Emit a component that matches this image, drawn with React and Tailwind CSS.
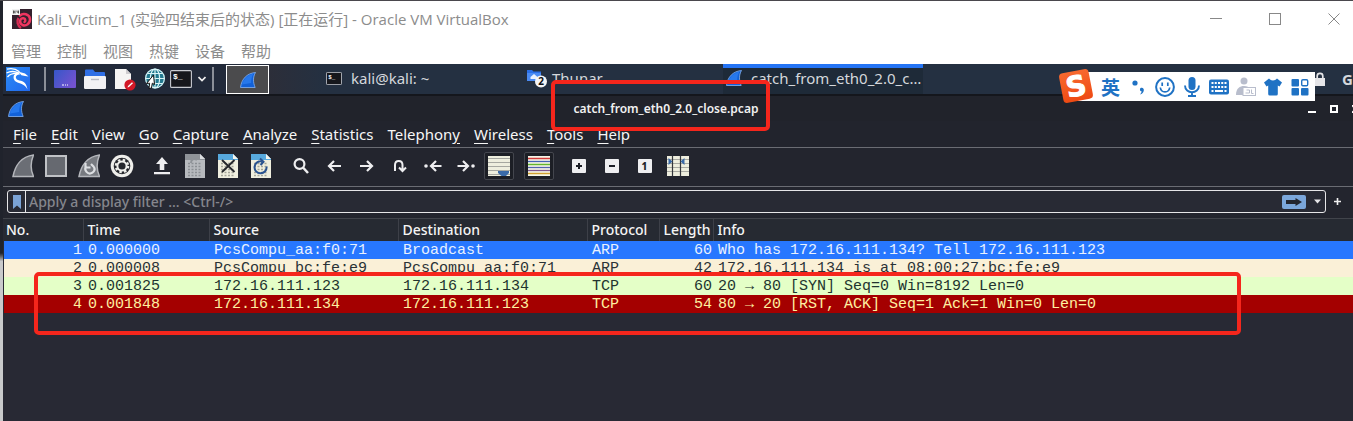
import React from "react";

const outerMenu = ["管理", "控制", "视图", "热键", "设备", "帮助"];

const menu = [
  ["", "F", "ile"],
  ["", "E", "dit"],
  ["", "V", "iew"],
  ["", "G", "o"],
  ["", "C", "apture"],
  ["", "A", "nalyze"],
  ["", "S", "tatistics"],
  ["Telephon", "y", ""],
  ["", "W", "ireless"],
  ["", "T", "ools"],
  ["", "H", "elp"],
];

const columns = [
  ["No.", "w-[79px]"],
  ["Time", "w-[126px]"],
  ["Source", "w-[189px]"],
  ["Destination", "w-[189px]"],
  ["Protocol", "w-[72px]"],
  ["Length", "w-[54px]"],
  ["Info", ""],
];

const packets = [
  { tone: "bg-[#2777ff] text-[#e8f1ff]", cells: ["1", "0.000000", "PcsCompu_aa:f0:71", "Broadcast", "ARP", "60", "Who has 172.16.111.134? Tell 172.16.111.123"] },
  { tone: "bg-[#faf0d7] text-[#2a3236]", cells: ["2", "0.000008", "PcsCompu_bc:fe:e9", "PcsCompu_aa:f0:71", "ARP", "42", "172.16.111.134 is at 08:00:27:bc:fe:e9"] },
  { tone: "bg-[#e4ffc7] text-[#22342f]", cells: ["3", "0.001825", "172.16.111.123", "172.16.111.134", "TCP", "60", "20 → 80 [SYN] Seq=0 Win=8192 Len=0"] },
  { tone: "bg-[#a40000] text-[#fff0a0]", cells: ["4", "0.001848", "172.16.111.134", "172.16.111.123", "TCP", "54", "80 → 20 [RST, ACK] Seq=1 Ack=1 Win=0 Len=0"] },
];

function Fin({ size = 16 }) {
  return (
    <svg width={size} height={size} viewBox="0 0 16 16" aria-hidden="true">
      <path d="M0.5 15.5C1.5 7 7 1.2 15.5 0.5C12.8 5 13 10.500 15.200 15.500Z" fill="#1261d8" stroke="#86b4f2" strokeWidth="0.8" />
      <path d="M2 12.500C4 6.500 8 3 13.500 1.800C11.500 5 11 8 11.200 11Z" fill="#2f82f5" opacity="0.7" />
    </svg>
  );
}

function DebianIcon() {
  return (
    <svg width="20" height="20" viewBox="0 0 20 20" aria-hidden="true">
      <rect width="20" height="20" fill="#33202d" />
      <path d="M8 6.500C11 3.500 17.500 5 18 10C18.300 14.500 14 17.500 10.500 16C6.500 14 8 8.500 11.500 9.300C14 10 13.500 12.500 12.500 13" fill="none" stroke="#ef3560" strokeWidth="2.500" strokeLinecap="round" />
      <path d="M6.500 9C4.500 12 5.500 16.500 9 19" fill="none" stroke="#d52b54" strokeWidth="2.400" />
      <rect width="8" height="6" fill="#f2f2f2" />
      <path d="M1.500 1.500V4.500M1.500 3H3M3 1.500V4.500M5 1.500V3.200H6.800M6.500 1.500V4.500" stroke="#333" strokeWidth="0.8" fill="none" />
    </svg>
  );
}

function KaliIcon() {
  return (
    <svg width="24" height="24" viewBox="0 0 24 24" aria-hidden="true">
      <defs>
        <linearGradient id="kali" x1="0" y1="0" x2="1" y2="1">
          <stop offset="0" stopColor="#2b8bf5" />
          <stop offset="1" stopColor="#2169ee" />
        </linearGradient>
      </defs>
      <rect width="24" height="24" fill="url(#kali)" />
      <path d="M1 2.200C5 1 10 2 13.500 4.800M0.500 6C4 4.200 9 4.200 13 6M1.500 10C4 7.200 7 6.200 11 6.500" fill="none" stroke="#fff" strokeWidth="1.300" />
      <path d="M12 4.500L19 6.500L22.500 9.500L19 9L15.500 8.300Z" fill="#fff" />
      <path d="M14 7.500C9.500 7 8.500 11.500 12 13C16 14.300 20 14 21.500 22.500C19 17.500 15.500 17 11.500 15.500C6 13.500 6 6 13 5.500Z" fill="#fff" />
    </svg>
  );
}

function DesktopIcon() {
  return (
    <svg width="22" height="18" viewBox="0 0 22 18" aria-hidden="true">
      <defs>
        <linearGradient id="desk" x1="0" y1="0" x2="1" y2="0.6">
          <stop offset="0" stopColor="#3657c9" />
          <stop offset="1" stopColor="#7252cf" />
        </linearGradient>
      </defs>
      <rect width="22" height="18" rx="1" fill="url(#desk)" />
      <path d="M8 15H10M11 15H12M13 15H14" stroke="#fff" strokeWidth="1.200" />
    </svg>
  );
}

function FolderIcon() {
  return (
    <svg width="22" height="20" viewBox="0 0 22 20" aria-hidden="true">
      <path d="M1 9V1.500Q1 0.500 2 0.500H9L11 3H20Q21 3 21 4V9Z" fill="#2f6fe6" />
      <rect y="7" width="22" height="13" rx="1.200" fill="#f1f1f4" />
      <path d="M7 10.500H15" stroke="#b9bac4" strokeWidth="1.400" />
    </svg>
  );
}

function DocIcon() {
  return (
    <svg width="22" height="23" viewBox="0 0 22 23" aria-hidden="true">
      <path d="M1 1H12L17 6V21H1Z" fill="#f6f5f4" />
      <path d="M12 1V6H17Z" fill="#cfcdd0" />
      <circle cx="16" cy="17" r="5.600" fill="#d31826" />
      <path d="M13.500 19.500L14 18L18 14.200L19 15.200L15 19Z" fill="#fff" />
    </svg>
  );
}

function GlobeIcon() {
  return (
    <svg width="22" height="22" viewBox="0 0 22 22" aria-hidden="true">
      <circle cx="11" cy="10.500" r="10" fill="#22798f" />
      <g fill="none" stroke="#d9f3f6" strokeWidth="1.200">
        <circle cx="11" cy="10.500" r="9.400" />
        <ellipse cx="11" cy="10.500" rx="4.600" ry="9.400" />
        <path d="M11 1V20M1.500 10.500H20.500M3.200 5.500H18.800M3.200 15.500H18.800" />
      </g>
      <path d="M9.500 7L2.500 15.500L5.600 15.200L5 20.500L7.500 20L8.300 15.200L10.500 16.500Z" fill="#fff" stroke="#111" strokeWidth="1" />
    </svg>
  );
}

function TerminalIcon({ w = 22, h = 18 }) {
  return (
    <svg width={w} height={h} viewBox="0 0 22 18" aria-hidden="true">
      <rect x="0.600" y="0.600" width="20.800" height="16.800" rx="1" fill="#16171c" stroke="#c9cbd1" strokeWidth="1.100" />
      <text x="3" y="9" fontSize="8" fontWeight="700" fontFamily="Liberation Mono, monospace" fill="#fff">$_</text>
    </svg>
  );
}

function ThunarIcon() {
  return (
    <svg width="21" height="19" viewBox="0 0 21 19" aria-hidden="true">
      <path d="M0 1H5L6.500 2.500H14V12H0Z" fill="#2a6fe8" />
      <path d="M0 4H14V12H0Z" fill="#4a8af2" />
      <path d="M3.500 8L7 5L10.500 8V10H3.500Z" fill="#e8f0ff" />
      <circle cx="14" cy="12.500" r="6" fill="#f5f5f5" />
      <text x="14" y="16.200" textAnchor="middle" fontSize="10" fontWeight="700" fontFamily="Noto Sans, sans-serif" fill="#111">2</text>
    </svg>
  );
}

function S({ w = 22, h = 24, children }) {
  return (
    <svg width={w} height={h} viewBox={`0 0 ${w} ${h}`} fill="none" aria-hidden="true">
      {children}
    </svg>
  );
}

const FIN = "M1 22.500C3 11.500 9.500 2.500 21.500 1C18.500 8 18.500 16 21.500 22.500Z";

function Sheet({ head, children, gray }) {
  return (
    <S w={20} h={24}>
      <path d="M0 0H15L20 5V24H0Z" fill={gray ? "#b7babe" : "#efeede"} />
      <path d="M0 0H15L20 5V6H0Z" fill={head} />
      <path d="M15 0V5H20Z" fill={gray ? "#dcdee0" : "#f5f5ee"} />
      <path d="M3 9.500H17M3 12.500H17M3 15.500H17M3 18.500H17M3 21.500H17" stroke={gray ? "#8b8f94" : "#a5a69a"} strokeWidth="1.300" strokeDasharray="2 1.500" />
      {children}
    </S>
  );
}

const arrow = { stroke: "#eeeef0", strokeWidth: 2.2 };

function ZoomBox({ children }) {
  return <span className="flex size-[14px] items-center justify-center rounded-[1px] bg-[#eeeef0] text-[10px] leading-none font-extrabold text-[#1c1e26]">{children}</span>;
}

const toolGroups = [
  [
    ["Start capture", <S><path d={FIN} fill="#6b6e75" stroke="#b4b6bb" strokeWidth="1.500" /></S>],
    ["Stop capture", <S><rect x="1" y="2" width="20" height="20" fill="#666970" stroke="#c0c2c6" strokeWidth="2" /></S>],
    ["Restart capture", <S><path d={FIN} fill="#777a80" stroke="#b4b6bb" strokeWidth="1.500" /><path d="M8.500 12A4.500 4.500 0 1 0 16 13M7.500 9V13.500H12.500M16 13L13 10" stroke="#dcdee1" strokeWidth="2.200" /></S>],
    ["Capture options", <S w={24}><circle cx="12" cy="12" r="11.300" fill="#efefeb" /><circle cx="12" cy="12" r="8.300" fill="#25272c" /><circle cx="12" cy="12" r="6" stroke="#efefeb" strokeWidth="2.600" strokeDasharray="2.400 2.312" /><circle cx="12" cy="12" r="4.600" stroke="#efefeb" strokeWidth="2" /></S>],
  ],
  [
    ["Open", <S w={16} h={18}><path d="M8 0L14 7H10.300V13H5.700V7H2ZM0 15H16V17.300H0Z" fill="#eeeef0" /></S>],
    ["Save", <Sheet gray head="#8f9398"><path d="M6 9C6 5 9 4 12 6" stroke="#8f9398" strokeWidth="2" /></Sheet>],
    ["Close file", <Sheet head="#57a9dd"><path d="M4 6L16.500 18M16.500 6L4 18" stroke="#25272c" strokeWidth="1.900" /></Sheet>],
    ["Reload", <Sheet head="#57a9dd"><path d="M15.500 12.500A6 6 0 1 1 11 7.500M9 4.500L12.500 7.700L9.500 11" stroke="#29528f" strokeWidth="2" /></Sheet>],
  ],
  [
    ["Find", <S w={18} h={18}><circle cx="7.500" cy="7" r="4.900" stroke="#eeeef0" strokeWidth="2.200" /><path d="M11 10.500L16 16" stroke="#eeeef0" strokeWidth="2.500" /></S>],
    ["Previous", <S w={14} h={14}><path d="M1.500 7H14M7 2L2 7L7 12" {...arrow} /></S>],
    ["Next", <S w={14} h={14}><path d="M0 7H12.500M7 2L12 7L7 12" {...arrow} /></S>],
    ["Go to packet", <S w={14} h={14}><path d="M2 12V6C2 0.500 9.500 0.500 9.500 6V11M6 8.500L9.500 12L13 8.500" stroke="#eeeef0" strokeWidth="2" /></S>],
    ["First packet", <S w={18} h={14}><circle cx="2" cy="7" r="1.800" fill="#eeeef0" /><path d="M6.500 7H17.500M12 2L7 7L12 12" {...arrow} /></S>],
    ["Last packet", <S w={18} h={14}><circle cx="16" cy="7" r="1.800" fill="#eeeef0" /><path d="M0.500 7H11.500M6 2L11 7L6 12" {...arrow} /></S>],
    ["Auto scroll", <S h={20}><rect width="22" height="20" fill="#eeeede" /><path d="M0 2.500H22M0 6.500H22M0 10.500H22M0 14.500H22M0 18.500H22" stroke="#a6a7a0" /><path d="M10 15H21V17L18 20H13.500L10 17Z" fill="#3a6aa8" /></S>, true],
  ],
  [["Colorize", <S h={20}><rect width="22" height="20" fill="#f6f6e8" /><path d="M0 2.500H22" stroke="#d33b3b" strokeWidth="1.500" /><path d="M0 5.500H22" stroke="#4362b5" strokeWidth="1.300" /><path d="M0 8.500H22" stroke="#62b52e" strokeWidth="1.500" /><path d="M0 11.500H22" stroke="#5263b0" strokeWidth="1.300" /><path d="M0 14.500H22" stroke="#80568c" strokeWidth="1.300" /><path d="M0 17.500H22" stroke="#d0a030" strokeWidth="1.500" /></S>, true]],
  [
    ["Zoom in", <ZoomBox><S w={8} h={8}><path d="M1 4H7M4 1V7" stroke="#1c1e26" strokeWidth="2" /></S></ZoomBox>],
    ["Zoom out", <ZoomBox><S w={8} h={8}><path d="M1 4H7" stroke="#1c1e26" strokeWidth="2" /></S></ZoomBox>],
    ["Normal size", <ZoomBox>1</ZoomBox>],
    ["Resize columns", <S h={20}><rect width="22" height="20" fill="#eeeede" /><path d="M0 3.500H22M0 7.500H22M0 11.500H22M0 15.500H22" stroke="#a9aaa2" /><path d="M5.500 0V20M13.500 0V20" stroke="#33353b" strokeWidth="1.200" /><path d="M1.500 2L5.500 5.500L1.500 9ZM17.500 2L13.500 5.500L17.500 9Z" fill="#3a6aa8" /></S>],
  ],
];

const imeItems = [
  ["Language", <span className="text-[19px] leading-none font-bold">英</span>],
  ["Punctuation", <S w={16} h={16}><circle cx="5" cy="4" r="2.600" fill="#1f72c4" /><path d="M10.500 9C12.500 8 14.500 9.500 13.700 12C13.200 13.800 12 15 10 15.500C11.200 14.300 11.600 13.300 11.500 12.300C9.800 12.200 9.500 10 10.500 9Z" fill="#1f72c4" /></S>],
  ["Emoji", <S w={20} h={20}><circle cx="10" cy="10" r="8.900" stroke="#1f72c4" strokeWidth="2" /><path d="M5.300 10.500C6 16.300 14 16.300 14.700 10.500M7.200 5.500V9M12.800 5.500V9" stroke="#1f72c4" strokeWidth="1.700" /></S>],
  ["Voice", <S w={16} h={20}><rect x="4.500" y="0" width="7" height="13" rx="3.500" fill="#1f72c4" /><path d="M1 8.500C1 17.500 15 17.500 15 8.500M8 15V18.500M4 19H12" stroke="#1f72c4" strokeWidth="1.900" /></S>],
  ["Keyboard", <S w={20} h={16}><rect x="0" y="0.500" width="20" height="15" rx="2" fill="#1f72c4" /><path d="M2.500 4H17.500M2.500 8H17.500" stroke="#fff" strokeWidth="2" strokeDasharray="2 1.250" /><path d="M2.500 12H4.500M6 12H14M15.500 12H17.500" stroke="#fff" strokeWidth="2" /></S>],
  ["Account", <S w={20} h={20}><circle cx="8" cy="4" r="3.500" fill="#b8bdcc" /><path d="M0 18C0 11 4 9 8 9C11 9 13 10 14 12V18Z" fill="#b8bdcc" /><rect x="7" y="10.500" width="12.500" height="8" fill="#fff" stroke="#b8bdcc" /><path d="M9.500 16H13.500V13H10.500M15.500 12.500V16.500H17.500" stroke="#b8bdcc" /></S>],
  ["Skin", <S w={18} h={18}><path d="M5 0.500C7 3 11 3 13 0.500L18 4.500L15.500 8.500L13.800 7.500V16Q13.800 17.500 12.300 17.500H5.700Q4.200 17.500 4.200 16V7.500L2.500 8.500L0 4.500Z" fill="#1f72c4" /></S>],
  ["Toolbox", <S w={18} h={18}><rect x="0.500" y="1" width="7.500" height="7.500" rx="1" fill="#1f72c4" /><rect x="0.500" y="10" width="7.500" height="7.500" rx="1" fill="#1f72c4" /><rect x="10" y="10" width="7.500" height="7.500" rx="1" fill="#1f72c4" /><rect x="10.700" y="1.700" width="6" height="6" rx="1.200" stroke="#1f72c4" strokeWidth="1.400" /></S>],
];

function ImeBar() {
  return (
    <div className="absolute top-[71px] right-[38px] flex h-[29px] bg-white pr-0.5 pl-5 font-['Noto_Sans_CJK_SC',sans-serif] text-[#1f72c4]">
      {imeItems.map(([label, icon]) => (
        <button key={label} aria-label={label} className="flex w-[27px] items-center justify-center">{icon}</button>
      ))}
      <svg className="absolute -top-1 -left-5 overflow-visible" width="38" height="36" viewBox="0 0 38 36" aria-hidden="true">
        <defs>
          <linearGradient id="ime" x1="0" y1="0" x2="0" y2="1">
            <stop offset="0" stopColor="#f8692f" />
            <stop offset="1" stopColor="#ee4a13" />
          </linearGradient>
        </defs>
        <g transform="rotate(-11 19 18)">
          <rect x="4" y="3" width="30" height="30" rx="4" fill="url(#ime)" />
          <text x="19" y="28" textAnchor="middle" fontSize="28" fontWeight="700" fontFamily="DejaVu Sans, sans-serif" fill="#fff" stroke="#fff" strokeWidth="1">S</text>
        </g>
      </svg>
    </div>
  );
}

function HostTitle() {
  return (
    <header className="h-[63px] bg-white font-['Open_Sans','Noto_Sans_CJK_SC',sans-serif] text-[15px] text-[#8c8c8c]">
      <div className="flex h-9 items-center pr-[13px] pl-[9px]">
        <DebianIcon />
        <h1 className="ml-[5px] whitespace-nowrap">Kali_Victim_1 (实验四结束后的状态) [正在运行] - Oracle VM VirtualBox</h1>
        <div className="ml-auto flex gap-[47px]">
          <button aria-label="Minimize"><S w={12} h={12}><path d="M0 5.500H12" stroke="#888" /></S></button>
          <button aria-label="Maximize"><S w={12} h={12}><rect x="0.500" y="0.500" width="11" height="11" stroke="#888" /></S></button>
          <button aria-label="Close"><S w={12} h={12}><path d="M0.500 0.500L11.500 11.500M11.500 0.500L0.500 11.500" stroke="#888" /></S></button>
        </div>
      </div>
      <nav className="flex h-7 items-center gap-4 pl-2">
        {outerMenu.map((m) => <button key={m}>{m}</button>)}
      </nav>
    </header>
  );
}

function Taskbar() {
  return (
    <div className="flex h-8 items-stretch overflow-hidden border-b-2 border-[#14161c] bg-[#243041] text-[15px] text-[#d5d8dc]">
      <div className="flex shrink-0 items-center bg-[#222a3a] pl-[3px]">
        <button aria-label="Applications"><KaliIcon /></button>
        <span className="ml-[14px] h-6 w-0.5 bg-[#8b8f98]" />
        <div className="ml-2 flex items-center gap-2">
          <button aria-label="Desktop"><DesktopIcon /></button>
          <button aria-label="Files"><FolderIcon /></button>
          <button aria-label="Editor"><DocIcon /></button>
          <button aria-label="Browser"><GlobeIcon /></button>
        </div>
        <button aria-label="Terminal" className="ml-1"><TerminalIcon /></button>
        <button aria-label="More terminals" className="ml-1.5"><S w={8} h={6}><path d="M0.500 1L4 4.500L7.500 1" stroke="#f0f0f0" strokeWidth="1.700" /></S></button>
        <span className="ml-1.5 h-6 w-0.5 bg-[#8b8f98]" />
      </div>
      <div className="shrink-0 bg-[#222a3a] pt-px pl-3">
        <button aria-label="Wireshark" className="flex h-[29px] w-[43px] items-center justify-center border border-white bg-[#4b4b4d]"><Fin /></button>
      </div>
      <div className="w-[54px] shrink-0 bg-linear-to-r from-[#2c2e39] to-[#243041]" />
      <button className="flex w-[200px] items-center gap-[9px] pb-0.5 pl-[3px]"><TerminalIcon w={16} h={13} />kali@kali: ~</button>
      <button className="flex w-[200px] items-center gap-1 pb-0.5 pl-1"><ThunarIcon />Thunar</button>
      <button className="flex w-[200px] items-center gap-[9px] bg-[#1e2a38] pb-0.5 pl-[3px] shadow-[inset_0_4px_0_#2474f5]"><Fin /><span className="min-w-0 flex-1 text-left whitespace-nowrap">catch_from_eth0_2.0_c…</span></button>
      <div className="ml-auto flex shrink-0 items-center gap-[17px]">
        <svg width="10" height="14" viewBox="0 0 10 14" aria-hidden="true"><path d="M2.200 7V4C2.200 0.500 7.800 0.500 7.800 4V7" fill="none" stroke="#e5e5e8" strokeWidth="1.700" /><rect y="6" width="10" height="8" fill="#e5e5e8" /></svg>
        <span className="w-[11px] overflow-hidden font-bold">G</span>
      </div>
    </div>
  );
}

function WindowTitle() {
  return (
    <div className="flex h-[25px] items-center bg-[#21232b] px-[5px]">
      <Fin />
      <h2 className="flex-1 text-center text-[12px] font-semibold text-[#f1f1f1]">catch_from_eth0_2.0_close.pcap</h2>
      <div className="-mr-[5px] flex w-[45px] items-center gap-[14px] overflow-hidden">
        <button aria-label="Minimize" className="shrink-0"><S w={8} h={8}><path d="M0 7H8" stroke="#fff" strokeWidth="2" /></S></button>
        <button aria-label="Maximize" className="shrink-0"><S w={8} h={8}><rect x="1" y="1" width="6" height="6" stroke="#fff" strokeWidth="2" /></S></button>
        <button aria-label="Close" className="shrink-0"><S w={8} h={8}><path d="M0 0L8 8M8 0L0 8" stroke="#fff" strokeWidth="2" /></S></button>
      </div>
    </div>
  );
}

export default function App() {
  return (
    <div className="relative flex min-h-screen flex-col overflow-hidden border-t border-[#4a484d] bg-[#282934] font-['Noto_Sans','Noto_Sans_CJK_SC',sans-serif]">
      <div className="flex flex-1">
        <div className="w-[3px] shrink-0 bg-linear-to-b from-[#20232c] from-60% to-[#c9cacb] to-62%" />
        <div className="min-w-0 flex-1">
          <HostTitle />
          <Taskbar />
          <WindowTitle />
          <nav className="flex h-[27px] items-center gap-[14px] border-b border-[#6a6c73] bg-[#22242d] pl-[10px] text-[15px] text-[#f6f6f6]">
            {menu.map(([a, b, c]) => (
              <button key={a + b + c} className="whitespace-nowrap">{a}<span className="underline underline-offset-3">{b}</span>{c}</button>
            ))}
          </nav>
          <div className="flex h-[39px] items-center gap-[7px] border-b border-[#6a6c73] bg-[#23252e] pb-0.5 pl-[3px]">
            {toolGroups.map((group, i) => (
              <div key={i} className="flex items-center">
                {group.map(([label, icon, on]) => (
                  <button key={label} aria-label={label} className="flex w-[33px] items-center justify-center">
                    {on ? <span className="flex h-7 w-[30px] items-center justify-center rounded-xs border border-[#44464e] bg-[#1c1e25]">{icon}</span> : icon}
                  </button>
                ))}
              </div>
            ))}
          </div>
          <div className="flex h-8 items-center gap-2 border-b border-[#41444b] bg-[#23252e] pr-[10px] pb-0.5 pl-1">
            <div className="flex h-[23px] flex-1 items-center rounded-[3px] border border-[#e6e6e8] bg-[#282a34]">
              <button aria-label="Bookmarks" className="flex h-full w-[18px] items-center justify-center border-r border-[#e6e6e8]">
                <S w={8} h={14}><path d="M0 0H8V14L4 10.500L0 14Z" fill="#7ba3d6" /></S>
              </button>
              <input aria-label="Display filter" placeholder="Apply a display filter ... <Ctrl-/>" className="h-full min-w-0 flex-1 bg-transparent pl-[3px] text-[14px] font-medium outline-none placeholder:text-[#85868d]" />
              <button aria-label="Apply filter" className="flex h-[14px] w-6 items-center justify-center rounded-[2px] bg-[#7ba7db]">
                <S w={16} h={10}><path d="M0 3H9.500V1L16 5L9.500 9V7H0Z" fill="#22252e" /></S>
              </button>
              <button aria-label="Filter history" className="mr-1 ml-2"><S w={7} h={5}><path d="M0 0.500H7L3.500 4.500Z" fill="#e6e6e8" /></S></button>
            </div>
            <button aria-label="Add filter button" className="mr-0.5"><S w={7} h={7}><path d="M0 3.500H7M3.500 0V7" stroke="#f0f0f0" strokeWidth="1.600" /></S></button>
          </div>
          <main className="pl-px">
            <table className="w-full table-fixed border-collapse">
              <thead className="bg-[#262a32] text-[14px] leading-[22px] text-[#f4f4f4]">
                <tr>
                  {columns.map(([name, w], i) => (
                    <th key={name} className={`${w} h-[22px] p-0 text-left font-medium ${i ? "border-l border-[#3d4048] pl-1" : "pl-0.5"}`}>{name}</th>
                  ))}
                </tr>
              </thead>
              <tbody className="font-['Liberation_Mono',monospace] text-[15px] leading-4">
                {packets.map((p) => (
                  <tr key={p.cells[0]} className={p.tone}>
                    {p.cells.map((c, i) => (
                      <td key={i} className={`h-[18px] overflow-hidden p-0 pt-0.5 whitespace-nowrap ${i === 0 || i === 5 ? "pr-px text-right" : "pl-[5px]"}`}>{c}</td>
                    ))}
                  </tr>
                ))}
              </tbody>
            </table>
          </main>
        </div>
      </div>
      <ImeBar />
      <div className="pointer-events-none absolute top-[79px] left-[551px] h-[51px] w-[219px] rounded-[5px] border-4 border-[#f5261c]" />
      <div className="pointer-events-none absolute top-[271px] left-[34px] h-[63px] w-[1207px] rounded-[5px] border-4 border-[#f5261c]" />
    </div>
  );
}
